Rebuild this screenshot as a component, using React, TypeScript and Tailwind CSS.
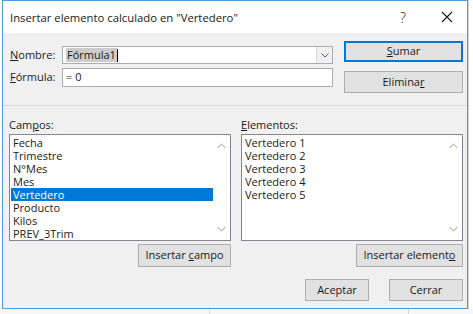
import React from 'react';

const font = { fontFamily: '"Open Sans", "Noto Sans", sans-serif' };

const campos = [
  'Fecha',
  'Trimestre',
  'N°Mes',
  'Mes',
  'Vertedero',
  'Producto',
  'Kilos',
  'PREV_3Trim',
];

const elementos = [
  'Vertedero 1',
  'Vertedero 2',
  'Vertedero 3',
  'Vertedero 4',
  'Vertedero 5',
];

function Chevron({ up }: { up?: boolean }) {
  return (
    <svg width="9" height="6" viewBox="0 0 9 6" className="block">
      <path
        d={up ? 'M0.5 5 L4.5 1 L8.5 5' : 'M0.5 1 L4.5 5 L8.5 1'}
        fill="none"
        stroke="#c2c2c2"
        strokeWidth="1.2"
      />
    </svg>
  );
}

function Btn({
  children,
  className = '',
  primary,
}: {
  children: React.ReactNode;
  className?: string;
  primary?: boolean;
}) {
  return (
    <div
      className={`flex items-center justify-center bg-[#e1e1e1] text-[11px] text-[#1a1a1a] ${
        primary ? 'border-2 border-[#0078d7]' : 'border border-[#adadad]'
      } ${className}`}
    >
      {children}
    </div>
  );
}

function ListBox({
  items,
  selected,
  className = '',
}: {
  items: string[];
  selected?: number;
  className?: string;
}) {
  return (
    <div
      className={`flex h-[107px] border border-[#828790] bg-white ${className}`}
    >
      <div className="flex-1 pl-[1px] pt-[1px]">
        {items.map((it, i) => (
          <div
            key={it}
            className={`h-[13px] overflow-hidden pl-[2px] text-[11px] leading-[13px] ${
              i === selected ? 'bg-[#0078d7] text-white' : 'text-[#1a1a1a]'
            }`}
          >
            {it}
          </div>
        ))}
      </div>
      <div className="flex w-[17px] flex-col items-center justify-between py-[8px]">
        <Chevron up />
        <Chevron />
      </div>
    </div>
  );
}

export default function App() {
  return (
    <div
      className="relative h-[314px] w-[473px] overflow-hidden bg-white"
      style={font}
    >
      {/* spreadsheet grid behind the dialog */}
      <div className="absolute left-[468px] top-0 h-full w-[5px] border-l border-[#d4d4d4]" />
      <div className="absolute left-0 top-[309px] h-[5px] w-full bg-[#f7f7f7]" />
      <div className="absolute left-[209px] top-[309px] h-[5px] w-px bg-[#d4d4d4]" />
      <div className="absolute left-[408px] top-[309px] h-[5px] w-px bg-[#d4d4d4]" />

      {/* dialog window */}
      <div className="absolute left-[2px] top-0 flex h-[309px] w-[466px] flex-col border border-[#4a9be0] bg-[#f0f0f0]">
        {/* title bar */}
        <div className="flex h-[32px] items-center bg-white pl-[7px] text-[11.3px] text-[#1a1a1a]">
          <span className="flex-1 pt-[2px]">
            Insertar elemento calculado en "Vertedero"
          </span>
          <span className="mr-[35px] text-[14px] font-light">?</span>
          <svg width="12" height="12" viewBox="0 0 12 12" className="mr-[14px]">
            <path d="M1 1 L11 11 M11 1 L1 11" stroke="#1a1a1a" strokeWidth="1.1" />
          </svg>
        </div>

        {/* top row */}
        <div className="flex pl-[7px] pt-[8px]">
          <div className="mt-[5px] flex w-[323px] flex-col gap-[4px]">
            <div className="flex items-center">
              <span className="w-[52px] text-[11px] text-[#1a1a1a]">
                <u>N</u>ombre:
              </span>
              <div className="flex h-[18px] w-[271px] items-center border border-[#abadb3] bg-white">
                <span className="ml-[3px] bg-[#cccccc] px-[1px] text-[11px] leading-[14px] text-[#1a1a1a]">
                  Fórmula1
                </span>
                <span className="h-[13px] w-px bg-black" />
                <div className="ml-auto flex h-[16px] w-[16px] items-center justify-center border-l border-[#d9d9d9] bg-[#f0f0f0]">
                  <svg width="8" height="5" viewBox="0 0 8 5">
                    <path d="M0.5 0.5 L4 4 L7.5 0.5" fill="none" stroke="#606060" />
                  </svg>
                </div>
              </div>
            </div>
            <div className="flex items-center">
              <span className="w-[52px] text-[11px] text-[#1a1a1a]">
                <u>F</u>órmula:
              </span>
              <div className="flex h-[19px] w-[271px] items-center border border-[#abadb3] bg-white pl-[3px] text-[11px] text-[#1a1a1a]">
                = 0
              </div>
            </div>
          </div>
          <div className="ml-[11px] flex flex-col gap-[9px]">
            <Btn primary className="h-[21px] w-[119px]">
              <span>
                <u>S</u>umar
              </span>
            </Btn>
            <Btn className="h-[22px] w-[119px]">
              <span>
                Elimina<u>r</u>
              </span>
            </Btn>
          </div>
        </div>

        {/* separator */}
        <div className="mt-[12px] h-px bg-[#dadada]" />

        {/* lists */}
        <div className="flex gap-[10px] pl-[6px] pt-[11px]">
          <div className="flex w-[222px] flex-col">
            <span className="h-[17px] text-[11px] text-[#1a1a1a]">
              Cam<u>p</u>os:
            </span>
            <ListBox items={campos} selected={4} />
            <Btn className="ml-auto mt-[3px] h-[23px] w-[93px]">
              <span>
                Insertar <u>c</u>ampo
              </span>
            </Btn>
          </div>
          <div className="flex w-[222px] flex-col">
            <span className="h-[17px] text-[11px] text-[#1a1a1a]">
              <u>E</u>lementos:
            </span>
            <ListBox items={elementos} />
            <Btn className="ml-auto mt-[3px] h-[23px] w-[107px]">
              <span>
                Insertar element<u>o</u>
              </span>
            </Btn>
          </div>
        </div>

        {/* bottom buttons */}
        <div className="mt-[12px] flex justify-end gap-[20px] pr-[4px]">
          <Btn className="h-[22px] w-[64px]">Aceptar</Btn>
          <Btn className="h-[22px] w-[74px]">Cerrar</Btn>
        </div>
      </div>
    </div>
  );
}
